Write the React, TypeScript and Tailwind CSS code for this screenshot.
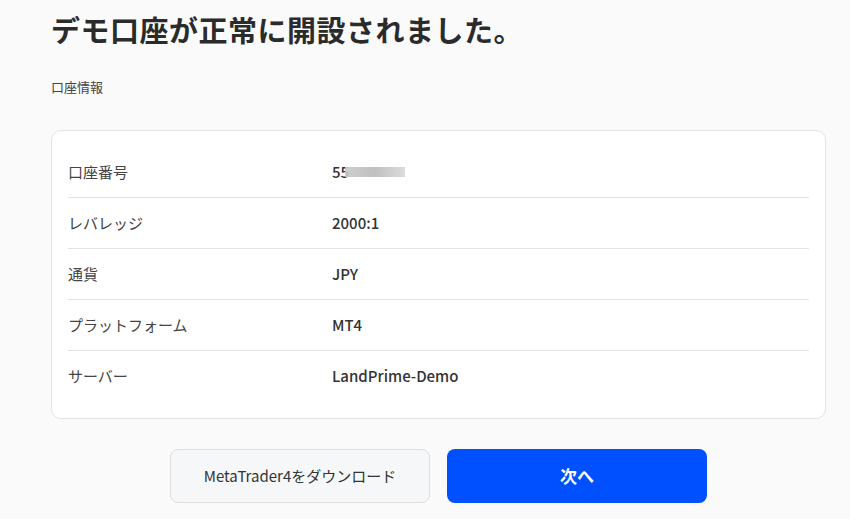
import React from "react";

const rows = [
  { label: "口座番号", value: "55", masked: true },
  { label: "レバレッジ", value: "2000:1" },
  { label: "通貨", value: "JPY" },
  { label: "プラットフォーム", value: "MT4" },
  { label: "サーバー", value: "LandPrime-Demo" },
];

export default function App() {
  return (
    <div
      className="min-h-screen w-full bg-[#fafafa] text-[#333333]"
      style={{ fontFamily: '"Noto Sans CJK JP", "Noto Sans", sans-serif' }}
    >
      <div className="ml-[51px] w-[775px] pt-[9px]">
        <h1 className="text-[29px] font-bold leading-[40px] tracking-[0.5px] text-[#2b2b2b]">
          デモ口座が正常に開設されました。
        </h1>
        <p className="mt-[28px] text-[13px] leading-[20px] text-[#444444]">口座情報</p>

        {/* account info card */}
        <div className="mt-[33px] rounded-[10px] border border-[#e3e3e3] bg-white px-4 py-4">
          {rows.map((r, i) => (
            <div
              key={r.label}
              className={
                "flex h-[51px] items-center text-[15px] " +
                (i < rows.length - 1 ? "border-b border-[#e3e3e3]" : "")
              }
            >
              <div className="w-[264px] text-[#444444]">{r.label}</div>
              <div className="flex items-center font-medium text-[#333333]">
                {r.value}
                {r.masked && (
                  <span className="ml-[-4px] inline-block h-[10px] w-[60px] bg-gradient-to-r from-[#c8c8c8] via-[#b9b9b9] to-[#d8d8d8] opacity-90" />
                )}
              </div>
            </div>
          ))}
        </div>

        <div className="mt-[30px] flex justify-center gap-[17px]">
          <button className="h-[54px] w-[260px] rounded-[8px] border border-[#dedede] bg-[#f6f7f9] text-[15px] text-[#333333]">
            MetaTrader4をダウンロード
          </button>
          <button className="h-[54px] w-[260px] rounded-[8px] bg-[#0050ff] text-[17px] font-bold text-white">
            次へ
          </button>
        </div>
      </div>
    </div>
  );
}
